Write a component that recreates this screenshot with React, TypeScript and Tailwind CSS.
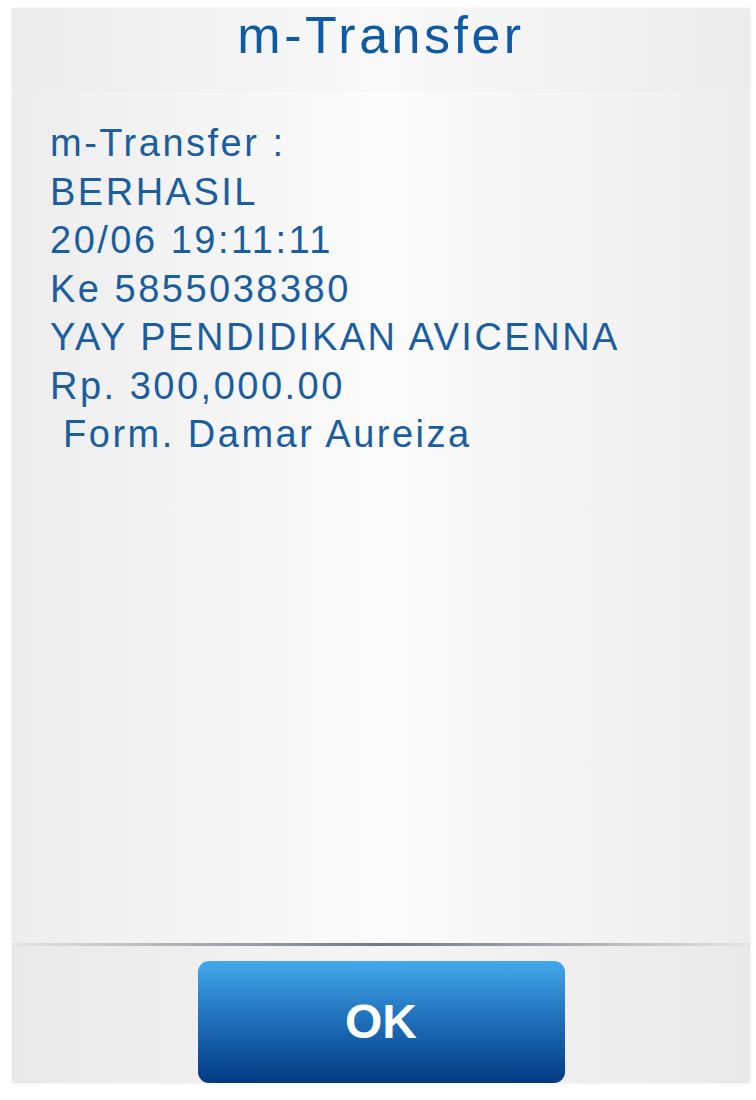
export default function App() {
  const lines = [
    "m-Transfer :",
    "BERHASIL",
    "20/06 19:11:11",
    "Ke 5855038380",
    "YAY PENDIDIKAN AVICENNA",
    "Rp. 300,000.00",
    "\u00a0Form. Damar Aureiza",
  ];

  return (
    <div className="w-[756px] h-[1100px] bg-white pt-[8px] pl-[12px] font-['Liberation_Sans',Arial,sans-serif]">
      <div className="w-[738px] h-[1075px] flex flex-col bg-[#efefef] shadow-[0_0_3px_rgba(0,0,0,0.08)]">
        {/* title */}
        <div className="h-[85px] flex justify-center bg-gradient-to-r from-[#ececec] via-[#f9f9f9] to-[#ececec]">
          <h1 className="text-[52px] leading-[52px] mt-[1px] text-[#0f5aa5] tracking-[3.5px]">m-Transfer</h1>
        </div>
        <div className="h-[2px] bg-gradient-to-r from-[#efefef] via-[#ffffff] to-[#efefef]" />

        {/* message */}
        <div className="flex-1 px-[38px] pt-[24px] bg-gradient-to-r from-[#ededed] via-[#fbfbfb] to-[#ededed]">
          {lines.map((l) => (
            <p key={l} className="text-[38px] leading-[48.5px] text-[#1b5e9f] tracking-[2.5px] whitespace-pre">
              {l}
            </p>
          ))}
        </div>

        {/* separator */}
        <div className="h-[3px] bg-gradient-to-r from-[#e4e4e4] via-[#6f7985] to-[#e4e4e4]" />

        {/* footer */}
        <div className="h-[137px] flex justify-center items-end pt-[15px] bg-gradient-to-r from-[#e9e9e9] via-[#f5f5f5] to-[#e9e9e9]">
          <button className="w-[367px] h-[122px] rounded-[11px] bg-gradient-to-b from-[#43a9ea] via-[#1e6db9] to-[#043b83] text-white text-[48px] font-bold">
            OK
          </button>
        </div>
      </div>
    </div>
  );
}
